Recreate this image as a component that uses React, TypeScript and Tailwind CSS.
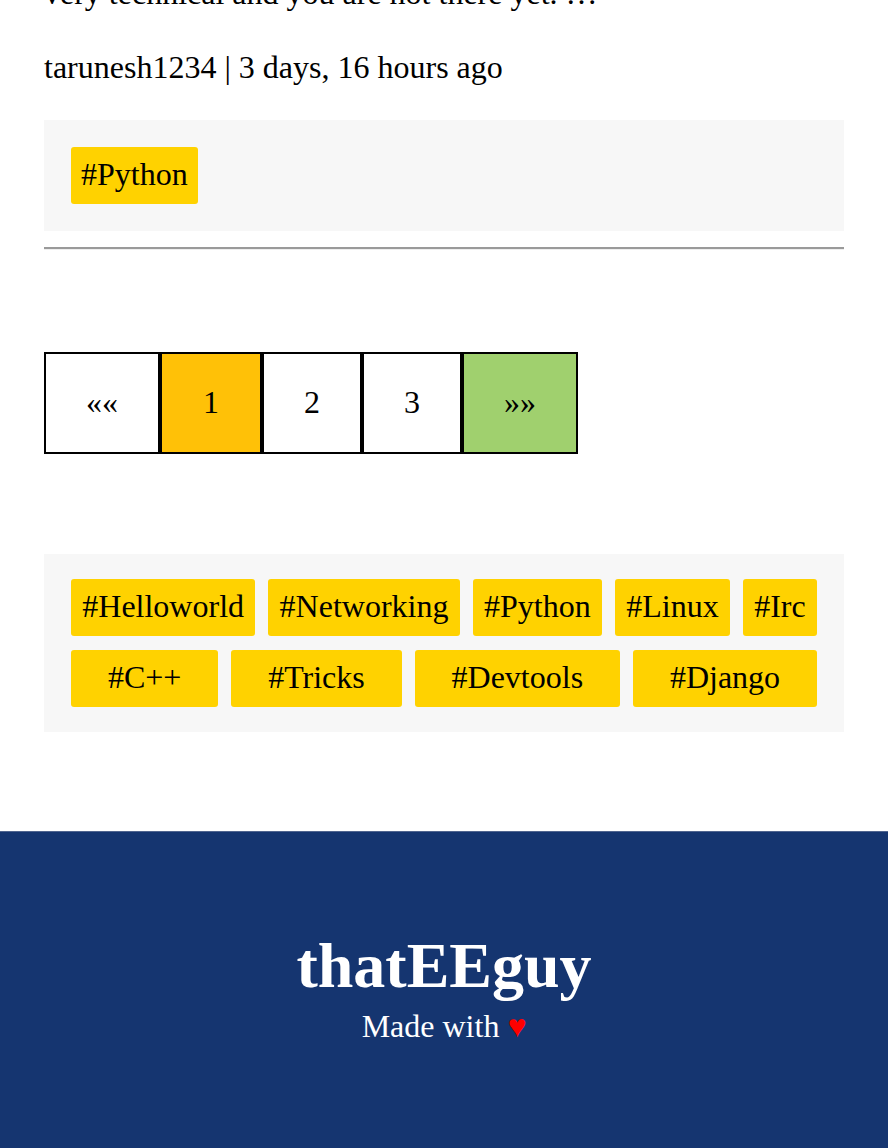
import React from 'react';

const cloud = ['Helloworld', 'Networking', 'Python', 'Linux', 'Irc', 'C++', 'Tricks', 'Devtools', 'Django'];

function Tag({ name, grow }: { name: string; grow?: boolean }) {
  return (
    <a
      href="#"
      className={
        'block rounded-[3px] bg-[#ffd200] px-[10px] pt-[9px] pb-[11.4px] text-center text-black ' + (grow ? 'grow' : '')
      }
    >
      #{name}
    </a>
  );
}

export default function App() {
  const pages = [
    { label: '««', cls: 'w-[116px] bg-white' },
    { label: '1', cls: 'w-[102px] bg-[#ffc107]' },
    { label: '2', cls: 'w-[100px] bg-white' },
    { label: '3', cls: 'w-[100px] bg-white' },
    { label: '»»', cls: 'w-[116px] bg-[#a0d06e]' },
  ];

  return (
    <div className="h-[1148px] overflow-hidden bg-white font-['Liberation_Serif',serif] text-[32px] leading-[1.15] text-black">
      <div className="px-[44px]">
        {/* end of the previous post, scrolled partly out of view */}
        <p className="-mt-[25px]">very technical and you are not there yet. …</p>
        <p className="mt-[37px]">tarunesh1234 | 3 days, 16 hours ago</p>

        <div className="mt-[34px] flex bg-[#f7f7f7] p-[27px]">
          <Tag name="Python" />
        </div>

        <hr className="mt-[16px] border-0 border-t-2 border-b border-t-[#9a9a9a] border-b-[#eeeeee]" />

        <nav className="mt-[102px] flex">
          {pages.map((p) => (
            <a
              key={p.label}
              href="#"
              className={'block border-2 border-black pt-[30px] pb-[31.2px] text-center ' + p.cls}
            >
              {p.label}
            </a>
          ))}
        </nav>

        <div className="mt-[100px] flex flex-wrap gap-x-[13px] gap-y-[14px] bg-[#f7f7f7] px-[27px] py-[25px]">
          {cloud.map((t) => (
            <Tag key={t} name={t} grow />
          ))}
        </div>
      </div>

      <footer className="mt-[99px] border-t border-[#50658f] bg-[#153570] pt-[98px] pb-[120px] text-center text-white">
        <h1 className="text-[64px] font-bold leading-[71px]">thatEEguy</h1>
        <p className="mt-[7px]">
          Made with <span className="text-[#ff0000]">♥</span>
        </p>
      </footer>
    </div>
  );
}
